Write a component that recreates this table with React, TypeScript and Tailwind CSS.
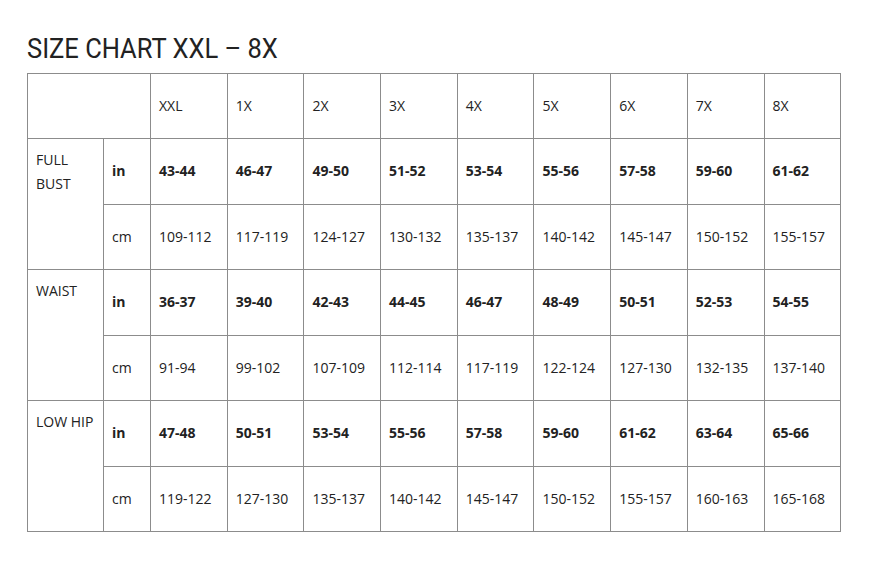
import React from "react";

const sizes = ["XXL", "1X", "2X", "3X", "4X", "5X", "6X", "7X", "8X"];
const data: { label: string[]; inch: string[]; cm: string[] }[] = [
  {
    label: ["FULL", "BUST"],
    inch: ["43-44", "46-47", "49-50", "51-52", "53-54", "55-56", "57-58", "59-60", "61-62"],
    cm: ["109-112", "117-119", "124-127", "130-132", "135-137", "140-142", "145-147", "150-152", "155-157"],
  },
  {
    label: ["WAIST"],
    inch: ["36-37", "39-40", "42-43", "44-45", "46-47", "48-49", "50-51", "52-53", "54-55"],
    cm: ["91-94", "99-102", "107-109", "112-114", "117-119", "122-124", "127-130", "132-135", "137-140"],
  },
  {
    label: ["LOW HIP"],
    inch: ["47-48", "50-51", "53-54", "55-56", "57-58", "59-60", "61-62", "63-64", "65-66"],
    cm: ["119-122", "127-130", "135-137", "140-142", "145-147", "150-152", "155-157", "160-163", "165-168"],
  },
];

const cell = "border border-[#8c8c8c] px-[8px] align-middle text-left";

export default function App() {
  return (
    <div className="min-h-[574px] w-[881px] bg-white pl-[27px] pt-[32px] text-[#222]" style={{ fontFamily: '"Open Sans", sans-serif' }}>
      <h1
        className="mb-[8px] block origin-left text-[28px] leading-[33px] font-normal text-[#222]"
        style={{ fontFamily: 'Roboto, sans-serif', transform: "scaleX(0.91)" }}
      >
        SIZE CHART XXL – 8X
      </h1>
      <table className="w-[813.5px] table-fixed border-collapse text-[14px] leading-[24px]">
        <colgroup>
          <col className="w-[76px]" />
          <col className="w-[47px]" />
          {sizes.map((s) => (
            <col key={s} className="w-[76.7px]" />
          ))}
        </colgroup>
        <tbody>
          <tr className="h-[65px]">
            <td colSpan={2} className={cell}></td>
            {sizes.map((s) => (
              <td key={s} className={cell}>{s}</td>
            ))}
          </tr>
          {data.map((row) => (
            <React.Fragment key={row.label.join(" ")}>
              <tr className="h-[65.5px]">
                <td rowSpan={2} className="border border-[#8c8c8c] px-[8px] pt-[9px] align-top text-left">
                  {row.label.map((l) => (
                    <div key={l}>{l}</div>
                  ))}
                </td>
                <td className={cell + " font-bold"}>in</td>
                {row.inch.map((v, i) => (
                  <td key={i} className={cell + " font-bold"}>{v}</td>
                ))}
              </tr>
              <tr className="h-[65.5px]">
                <td className={cell}>cm</td>
                {row.cm.map((v, i) => (
                  <td key={i} className={cell}>{v}</td>
                ))}
              </tr>
            </React.Fragment>
          ))}
        </tbody>
      </table>
    </div>
  );
}
